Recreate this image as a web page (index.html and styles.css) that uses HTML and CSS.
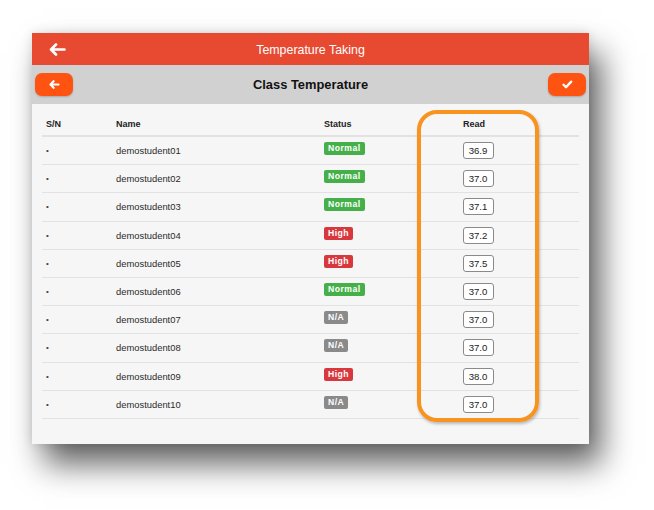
FILE: index.html
```html
<!DOCTYPE html>
<html>
<head>
<meta charset="utf-8">
<link rel="stylesheet" href="styles.css">
</head>
<body>
<div class="stage">
  <div class="panel">
    <div class="appbar">
      <div class="appbar-left">
        <svg class="back-icon" width="17" height="13" viewBox="0 0 17 13"><path d="M7 1.5 L2 6.5 L7 11.5 M2.3 6.5 H15.5" stroke="#fff" stroke-width="2.6" fill="none" stroke-linecap="round" stroke-linejoin="round"/></svg>
      </div>
      <div class="appbar-title">Temperature Taking</div>
      <div></div>
    </div>
    <div class="toolbar">
      <div class="toolbar-left">
        <button class="obtn"><svg width="11" height="9" viewBox="0 0 11 9"><path d="M4.6 1.2 L1.5 4.5 L4.6 7.8 M1.8 4.5 H9.5" stroke="#fff" stroke-width="2.2" fill="none" stroke-linecap="round" stroke-linejoin="round"/></svg></button>
      </div>
      <div class="toolbar-title">Class Temperature</div>
      <div class="toolbar-right">
        <button class="obtn"><svg width="11" height="9" viewBox="0 0 11 9"><path d="M1.6 4.8 L4 7.2 L9.2 1.6" stroke="#fff" stroke-width="2.3" fill="none" stroke-linecap="round" stroke-linejoin="round"/></svg></button>
      </div>
    </div>
    <div class="content">
      <div class="table">
        <div class="row head">
          <div class="c-sn">S/N</div>
          <div class="c-name">Name</div>
          <div class="c-status">Status</div>
          <div class="c-read">Read</div>
          <div></div>
        </div>
        <div class="row"><div class="c-sn"><span class="dot">•</span></div><div class="c-name">demostudent01</div><div class="c-status"><span class="badge ok">Normal</span></div><div class="c-read"><span class="box">36.9</span></div><div></div></div>
        <div class="row"><div class="c-sn"><span class="dot">•</span></div><div class="c-name">demostudent02</div><div class="c-status"><span class="badge ok">Normal</span></div><div class="c-read"><span class="box">37.0</span></div><div></div></div>
        <div class="row"><div class="c-sn"><span class="dot">•</span></div><div class="c-name">demostudent03</div><div class="c-status"><span class="badge ok">Normal</span></div><div class="c-read"><span class="box">37.1</span></div><div></div></div>
        <div class="row"><div class="c-sn"><span class="dot">•</span></div><div class="c-name">demostudent04</div><div class="c-status"><span class="badge high">High</span></div><div class="c-read"><span class="box">37.2</span></div><div></div></div>
        <div class="row"><div class="c-sn"><span class="dot">•</span></div><div class="c-name">demostudent05</div><div class="c-status"><span class="badge high">High</span></div><div class="c-read"><span class="box">37.5</span></div><div></div></div>
        <div class="row"><div class="c-sn"><span class="dot">•</span></div><div class="c-name">demostudent06</div><div class="c-status"><span class="badge ok">Normal</span></div><div class="c-read"><span class="box">37.0</span></div><div></div></div>
        <div class="row"><div class="c-sn"><span class="dot">•</span></div><div class="c-name">demostudent07</div><div class="c-status"><span class="badge na">N/A</span></div><div class="c-read"><span class="box">37.0</span></div><div></div></div>
        <div class="row"><div class="c-sn"><span class="dot">•</span></div><div class="c-name">demostudent08</div><div class="c-status"><span class="badge na">N/A</span></div><div class="c-read"><span class="box">37.0</span></div><div></div></div>
        <div class="row"><div class="c-sn"><span class="dot">•</span></div><div class="c-name">demostudent09</div><div class="c-status"><span class="badge high">High</span></div><div class="c-read"><span class="box">38.0</span></div><div></div></div>
        <div class="row"><div class="c-sn"><span class="dot">•</span></div><div class="c-name">demostudent10</div><div class="c-status"><span class="badge na">N/A</span></div><div class="c-read"><span class="box">37.0</span></div><div></div></div>
      </div>
    </div>
    <div class="ring"></div>
  </div>
</div>
</body>
</html>
```

FILE: styles.css
```css
* { box-sizing: border-box; }
html, body { margin: 0; padding: 0; background: #ffffff; }
body { font-family: "Liberation Sans", Arial, sans-serif; }

.stage { padding: 33px 0 0 32px; width: 654px; height: 510px; }

.panel {
  position: relative;
  width: 557px;
  height: 411px;
  background: #f6f6f6;
  box-shadow: 12px 20px 30px rgba(0,0,0,0.62), 0 0 10px rgba(0,0,0,0.12);
  display: flex;
  flex-direction: column;
}

.appbar {
  height: 32px;
  background: #e84a31;
  display: grid;
  grid-template-columns: 1fr auto 1fr;
  align-items: center;
}
.appbar-left { padding-left: 17px; display: flex; align-items: center; padding-top: 1px; }
.appbar-title { color: #fff; font-size: 12.4px; padding-top: 1px; }

.toolbar {
  height: 39px;
  background: #d1d1d1;
  display: grid;
  grid-template-columns: 1fr auto 1fr;
  align-items: center;
  padding: 0 3px;
}
.toolbar-right { display: flex; justify-content: flex-end; }
.toolbar-title { font-weight: bold; font-size: 12.9px; color: #111; }

.obtn {
  width: 38px;
  height: 23px;
  border: none;
  border-radius: 7px;
  background: #ff5411;
  display: flex;
  align-items: center;
  justify-content: center;
  padding: 0;
  box-shadow: 0 1px 2px rgba(0,0,0,0.2);
}

.content { padding: 10px 10px 0 10px; }

.row {
  display: grid;
  grid-template-columns: 74px 208px 100px 108px 1fr;
  height: 28.2px;
  align-items: center;
  border-bottom: 1px solid #e2e2e2;
  font-size: 9.4px;
  color: #2a2a2a;
}
.row.head {
  height: 23px;
  border-bottom: 2px solid #e2e2e2;
  font-weight: bold;
  font-size: 9px;
  color: #222;
  padding-bottom: 1px;
}
.c-sn { padding-left: 4px; }
.dot { font-size: 8px; position: relative; top: -1px; color: #444; }
.c-read { text-align: center; }
.row.head .c-read { padding-right: 8px; }

.badge {
  display: inline-block;
  color: #fff;
  font-weight: bold;
  font-size: 8.6px;
  letter-spacing: 0.5px;
  height: 13px;
  line-height: 13px;
  padding: 0 4px;
  border-radius: 2px;
  position: relative;
  top: -2px;
}
.badge.ok { background: #45b04a; }
.badge.high { background: #d8383d; }
.badge.na { background: #8a8a8a; }

.box {
  display: inline-block;
  width: 31px;
  height: 17px;
  line-height: 15px;
  border: 1px solid #8a8a8a;
  border-radius: 3px;
  background: #fff;
  font-size: 9.6px;
  color: #222;
  text-align: center;
}

.ring {
  position: absolute;
  left: 385px;
  top: 77px;
  width: 122px;
  height: 312px;
  border: 4.5px solid #f7931e;
  border-radius: 20px;
  box-shadow: 1px 2px 3px rgba(0,0,0,0.25);
}
```
